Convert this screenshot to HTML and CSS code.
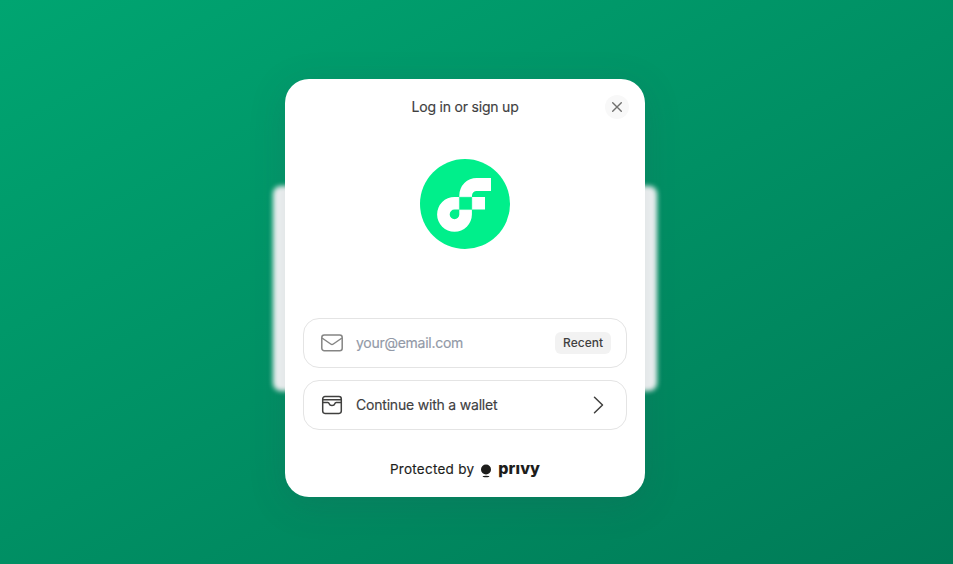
FILE: index.html
```html
<!DOCTYPE html>
<html lang="en">
<head>
<meta charset="utf-8">
<title>Log in or sign up</title>
<link rel="stylesheet" href="styles.css">
</head>
<body>
<div class="backdrop-card"></div>
<main class="modal">
  <header class="header">
    <h1 class="title">Log in or sign up</h1>
    <button class="close" aria-label="Close"><svg width="12" height="12" viewBox="0 0 12 12"><path d="M1.700 1.700l8.600 8.600M10.300 1.700l-8.600 8.600"/></svg></button>
  </header>
  <svg class="logo" width="90" height="90" viewBox="0 0 90 90">
    <circle cx="45" cy="45" r="45" fill="#00ef8b"/>
    <path fill="#fff" d="M39.3 55.4a4.8 4.8 0 1 1-4.8-4.8h4.8V38h-4.8a17.4 17.4 0 1 0 17.4 17.4v-4.8H39.3zM56.7 32H71V19H56.7a17.4 17.4 0 0 0-17.4 17.4V38H52v-1.4a4.6 4.6 0 0 1 4.700-4.600zM52 38h13v12.6H52z"/>
    <path fill="#00ef8b" stroke="#7ff7c5" stroke-width=".5" d="M39.3 38H52v12.6H39.3z"/>
  </svg>
  <div class="methods">
    <div class="row">
      <svg class="icon muted" width="24" height="24" viewBox="0 0 24 24"><rect x="1.8" y="4" width="20.4" height="15.8" rx="2.5"/><path d="M2 7l8.700 6a2.300 2.300 0 0 0 2.600 0L22 7"/></svg>
      <span class="label placeholder">your@email.com</span>
      <span class="badge">Recent</span>
    </div>
    <div class="row">
      <svg class="icon" width="24" height="24" viewBox="0 0 24 24"><rect x="2.7" y="3.6" width="18.6" height="16.8" rx="2.3"/><path d="M2.7 6.7h18.6M2.7 9.5h5.1c.8 0 1.2.5 1.4 1.2.3 1 1.300 1.800 2.800 1.800s2.500-.8 2.800-1.800c.2-.7.6-1.200 1.400-1.200h5.100"/></svg>
      <span class="label">Continue with a wallet</span>
      <svg class="chevron" width="24" height="24" viewBox="0 0 24 24"><path d="M8.500 4.200l8 7.800-8 7.800"/></svg>
    </div>
  </div>
  <footer class="footer">
    <span class="protected">Protected by</span>
    <svg class="mark" width="10" height="14" viewBox="0 0 10 14"><circle cx="5" cy="5.500" r="5"/><ellipse cx="5" cy="12.500" rx="3.400" ry=".8"/></svg>
    <span class="brand">prıvy</span>
  </footer>
</main>
</body>
</html>
```
FILE: styles.css
```css
* { box-sizing: border-box; }
body {
  margin: 0;
  height: 564px;
  overflow: hidden;
  padding-top: 79px;
  background: linear-gradient(152deg, #00a571, #007b57);
  font-family: Inter, sans-serif;
  color: #40403f;
}
.backdrop-card {
  position: absolute;
  left: 273px;
  top: 186px;
  width: 384px;
  height: 205px;
  border-radius: 8px;
  background: #f5f8f8;
  filter: blur(2.5px);
}
.modal {
  position: relative;
  width: 360px;
  height: 418px;
  margin-left: 285px;
  padding: 16px 18px;
  border-radius: 24px;
  background: #fff;
  box-shadow: 0 8px 36px rgba(55, 65, 81, .17);
  display: flex;
  flex-direction: column;
}
.header {
  display: grid;
  grid-template-columns: 24px 1fr 24px;
  align-items: center;
  height: 24px;
  margin: 0 -2px;
}
.title {
  grid-column: 2;
  margin: 0;
  text-align: center;
  font-size: 14px;
  line-height: 24px;
  font-weight: 400;
  letter-spacing: -.2px;
  -webkit-text-stroke: .15px;
}
.close {
  display: grid;
  place-items: center;
  width: 24px;
  height: 24px;
  padding: 0;
  border: 0;
  border-radius: 50%;
  background: #f8f8f8;
}
.close svg { stroke: #70706f; stroke-width: 1.4; stroke-linecap: round; fill: none; }
.logo { margin: 40px auto 0; flex: none; }
.methods { display: grid; gap: 12px; margin-top: 69px; }
.row {
  display: flex;
  align-items: center;
  height: 50px;
  padding: 0 15px 0 16px;
  border: 1px solid #e4e4e4;
  border-radius: 16px;
}
.icon { fill: none; stroke: #40403f; stroke-width: 1.5; stroke-linejoin: round; }
.icon.muted { stroke: #858584; }
.label { flex: 1; margin-left: 12px; font-size: 14px; line-height: 20px; letter-spacing: -.2px; -webkit-text-stroke: .15px; }
.placeholder { color: #9299a7; letter-spacing: -.27px; }
.badge {
  height: 22px;
  padding: 0 8px;
  border-radius: 6px;
  background: #f2f2f2;
  font-size: 12px;
  line-height: 22px;
  font-weight: 500;
}
.chevron { margin-right: 1px; fill: none; stroke: #40403f; stroke-width: 1.5; stroke-linecap: round; stroke-linejoin: round; }
.footer {
  display: flex;
  justify-content: center;
  align-items: center;
  height: 20px;
  margin-top: 29px;
  font-size: 13.5px;
  color: #1d1d1b;
}
.protected { letter-spacing: .26px; -webkit-text-stroke: .15px; }
.mark { margin: 3px 7px 0 7px; fill: #1d1d1b; }
.brand { font-size: 16px; line-height: 20px; font-weight: 800; letter-spacing: .1px; margin-top: -2px; }
```
